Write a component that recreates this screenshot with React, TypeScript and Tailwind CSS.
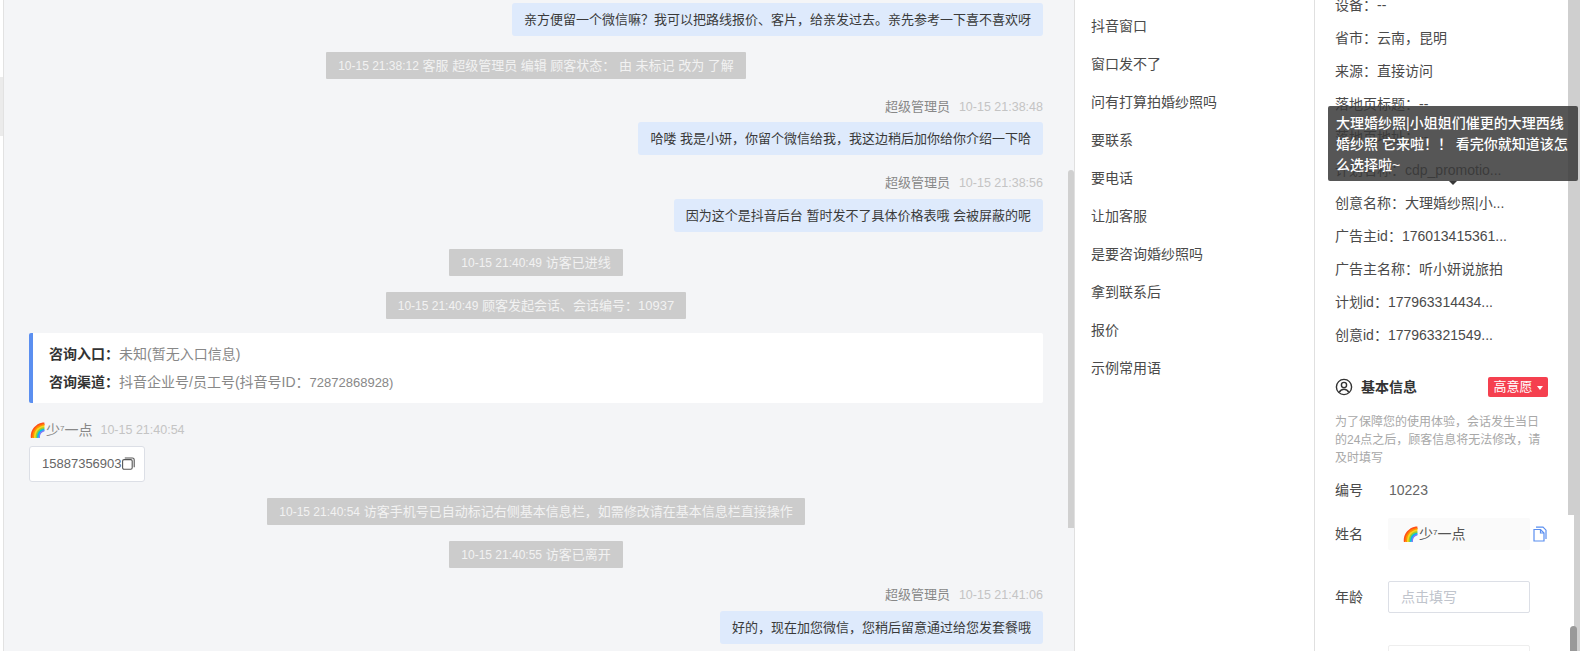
import type { ReactElement, ReactNode } from 'react';

const FONT = "font-['Liberation_Sans','Noto_Sans_CJK_SC',sans-serif]";

const quickReplies = [
  '抖音窗口',
  '窗口发不了',
  '问有打算拍婚纱照吗',
  '要联系',
  '要电话',
  '让加客服',
  '是要咨询婚纱照吗',
  '拿到联系后',
  '报价',
  '示例常用语',
];

const sourceRows = [
  '设备：--',
  '省市：云南，昆明',
  '来源：直接访问',
  '落地页标题：--',
  '落地页地址：--',
  '计划名称：cdp_promotio...',
  '创意名称：大理婚纱照|小...',
  '广告主id：176013415361...',
  '广告主名称：听小妍说旅拍',
  '计划id：177963314434...',
  '创意id：177963321549...',
];

function SystemLine({ time, children, className }: { time: string; children: ReactNode; className: string }): ReactElement {
  return (
    <div className={`flex justify-center ${className}`}>
      <span className="h-[27px] whitespace-nowrap rounded-[1px] bg-[#cccccc] px-3 text-[13px] leading-[27px] text-[#f2f2f2]">
        <span className="text-[12px]">{time}</span> {children}
      </span>
    </div>
  );
}

function AgentMessage({ time, text, className, gap }: { time: string; text: string; className: string; gap: string }): ReactElement {
  return (
    <div className={`flex flex-col items-end ${className}`}>
      <div className="flex h-[18px] items-center gap-[9px] text-[13px] leading-[18px]">
        <span className="text-[#888888]">超级管理员</span>
        <span className="text-[12.5px] text-[#c4c4c4]">{time}</span>
      </div>
      <Bubble text={text} className={gap} />
    </div>
  );
}

function Bubble({ text, className }: { text: string; className?: string }): ReactElement {
  return (
    <div className={`h-[33px] rounded-[3px] bg-[#deeafc] px-3 text-[13px] leading-[33px] text-[#3a3a3a] ${className ?? ''}`}>
      {text}
    </div>
  );
}

function NickName(): ReactElement {
  return (
    <span className="whitespace-nowrap text-[14px] leading-none">
      🌈少<sup className="text-[8px] leading-none">7</sup>一点
    </span>
  );
}

function CopyDoc(): ReactElement {
  return (
    <svg width="14" height="16" viewBox="0 0 14 16" fill="none" stroke="#5b8ff0" strokeWidth="1.2" className="shrink-0">
      <path d="M3 1.2h7l3 3V13" />
      <path d="M1 3.5h6.5L11 7v8H1z" />
      <path d="M7.5 3.5V7H11" />
    </svg>
  );
}

export default function App(): ReactElement {
  return (
    <div className={`flex h-[651px] w-[1580px] overflow-hidden bg-white ${FONT}`}>
      {/* 왼쪽 메뉴 가장자리 */}
      <div className="flex w-[3px] shrink-0 flex-col pt-[77px]">
        <div className="h-[59px] bg-[#ebebeb]" />
      </div>

      <main className="flex w-[1072px] shrink-0 border-x border-l-[#e2e2e2] border-r-[#e0e0e0] bg-[#f4f5f7]">
        <div className="w-[1064px] shrink-0 pl-[25px] pr-[25px] pt-[3px]">
          <div className="flex justify-end">
            <Bubble text="亲方便留一个微信嘛？我可以把路线报价、客片，给亲发过去。亲先参考一下喜不喜欢呀" />
          </div>
          <SystemLine className="mt-[16px]" time="10-15 21:38:12">
            客服 超级管理员 编辑 顾客状态： 由 未标记 改为 了解
          </SystemLine>
          <AgentMessage
            className="mt-[19px]"
            gap="mt-[6px]"
            time="10-15 21:38:48"
            text="哈喽 我是小妍，你留个微信给我，我这边稍后加你给你介绍一下哈"
          />
          <AgentMessage
            className="mt-[19px]"
            gap="mt-[7px]"
            time="10-15 21:38:56"
            text="因为这个是抖音后台 暂时发不了具体价格表哦 会被屏蔽的呢"
          />
          <SystemLine className="mt-[17px]" time="10-15 21:40:49">
            访客已进线
          </SystemLine>
          <SystemLine className="mt-[16px]" time="10-15 21:40:49">
            顾客发起会话、会话编号：10937
          </SystemLine>

          <div className="mt-[14px] h-[70px] rounded-[2px] border-l-4 border-l-[#5b8ff0] bg-white pl-[16px] pt-[7px] text-[14px] leading-[28px]">
            <div>
              <span className="font-bold text-[#333333]">咨询入口：</span>
              <span className="text-[#888888]">未知(暂无入口信息)</span>
            </div>
            <div>
              <span className="font-bold text-[#333333]">咨询渠道：</span>
              <span className="text-[#888888]">
                抖音企业号/员工号(抖音号ID：<span className="text-[13px]">72872868928)</span>
              </span>
            </div>
          </div>

          <div className="mt-[18px] flex h-[18px] items-center gap-[8px] text-[#888888]">
            <NickName />
            <span className="text-[12.5px] text-[#c4c4c4]">10-15 21:40:54</span>
          </div>
          <div className="mt-[7px] flex h-[36px] w-[116px] items-center rounded-[3px] border border-[#dcdfe6] bg-white pl-3 text-[13px] text-[#666666]">
            15887356903
            <svg width="13" height="13" viewBox="0 0 13 13" fill="none" stroke="#555555" strokeWidth="1.1" className="mb-[2px] shrink-0">
              <rect x="0.6" y="2.6" width="9.6" height="9.6" rx="1.5" />
              <path d="M2.8 1h7.6a1.8 1.8 0 0 1 1.8 1.8v7.4" />
            </svg>
          </div>

          <SystemLine className="mt-[16px]" time="10-15 21:40:54">
            访客手机号已自动标记右侧基本信息栏，如需修改请在基本信息栏直接操作
          </SystemLine>
          <SystemLine className="mt-[16px]" time="10-15 21:40:55">
            访客已离开
          </SystemLine>
          <AgentMessage
            className="mt-[18px]"
            gap="mt-[7px]"
            time="10-15 21:41:06"
            text="好的，现在加您微信，您稍后留意通过给您发套餐哦"
          />
        </div>
        {/* 채팅 스크롤바 */}
        <div className="w-[6px] shrink-0 pt-[170px]">
          <div className="h-[358px] rounded-t-[3px] bg-[#d0d0d0]" />
        </div>
      </main>

      <aside className="flex w-[239px] shrink-0 flex-col pl-[16px] pt-[7px] text-[14px] leading-[38px] text-[#4a4a4a]">
        {quickReplies.map((item) => (
          <div key={item}>{item}</div>
        ))}
      </aside>

      <section className="relative flex-1 border-l border-l-[#e0e0e0]">
        <div className="flex">
          <div className="w-[253px] shrink-0 px-[20px]">
            <div className="-mt-[11px] text-[14px] leading-[33px] text-[#4a4a4a]">
              {sourceRows.map((row) => (
                <div key={row} className="whitespace-nowrap">
                  {row}
                </div>
              ))}
            </div>

            <div className="mt-[25px] flex h-[20px] items-center">
              <svg width="18" height="18" viewBox="0 0 18 18" fill="none" stroke="#333333" strokeWidth="1.4">
                <circle cx="9" cy="9" r="7.6" />
                <circle cx="9" cy="7" r="2.6" />
                <path d="M4.2 14.4c1-2.2 2.8-3.2 4.8-3.2s3.8 1 4.8 3.2" />
              </svg>
              <span className="ml-[8px] text-[14px] font-bold text-[#333333]">基本信息</span>
              <div className="ml-auto flex h-[20px] w-[60px] items-center justify-center gap-[4px] rounded-[2px] bg-[#f5404f] text-[13px] text-white">
                高意愿
                <span className="mt-[1px] border-x-[3.5px] border-t-[4px] border-x-transparent border-t-white" />
              </div>
            </div>

            <p className="mt-[16px] w-[213px] text-[12px] leading-[18px] text-[#a8a8a8]">
              为了保障您的使用体验，会话发生当日的24点之后，顾客信息将无法修改，请及时填写
            </p>

            <div className="mt-[13px] flex h-[20px] items-center">
              <span className="w-[54px] text-[14px] text-[#4a4a4a]">编号</span>
              <span className="text-[14px] text-[#666666]">10223</span>
            </div>

            <div className="mt-[18px] flex items-center">
              <span className="w-[53px] text-[14px] text-[#4a4a4a]">姓名</span>
              <div className="flex h-[32px] w-[142px] items-center rounded-[2px] bg-[#fafafa] pl-[14px] text-[#555555]">
                <NickName />
              </div>
              <span className="ml-[3px]">
                <CopyDoc />
              </span>
            </div>

            <div className="mt-[31px] flex items-center">
              <span className="w-[53px] text-[14px] text-[#4a4a4a]">年龄</span>
              <div className="flex h-[32px] w-[142px] items-center rounded-[2px] border border-[#dcdfe6] bg-white pl-[12px] text-[14px] text-[#c0c4cc]">
                点击填写
              </div>
            </div>

            <div className="ml-[53px] mt-[32px] h-[32px] w-[142px] rounded-[2px] border border-[#eeeeee] bg-white" />
          </div>

          {/* 패널 스크롤바 */}
          <div className="flex h-[651px] w-[12px] shrink-0 flex-col">
            <div className="h-[515px] shrink-0 bg-[#cfcfcf]" />
            <div className="relative flex-1 border-r-[6px] border-r-[#d0d0d0]">
              <div className="absolute left-[2px] top-[111px] h-[30px] w-[7px] rounded-t-[4px] bg-[#999999]" />
            </div>
          </div>
        </div>

        {/* 툴팁 */}
        <div className="absolute left-[13px] top-[106px] h-[75px] w-[250px] rounded-[2px] bg-[#383838]/85 px-2 pt-[7px] text-[14px] font-medium leading-[21px] text-white">
          大理婚纱照|小姐姐们催更的大理西线
          <br />
          婚纱照 它来啦！！ 看完你就知道该怎
          <br />
          么选择啦~
          <span className="absolute left-[121px] top-[75px] border-x-[4px] border-t-[4px] border-x-transparent border-t-[#383838]" />
        </div>
      </section>
    </div>
  );
}
